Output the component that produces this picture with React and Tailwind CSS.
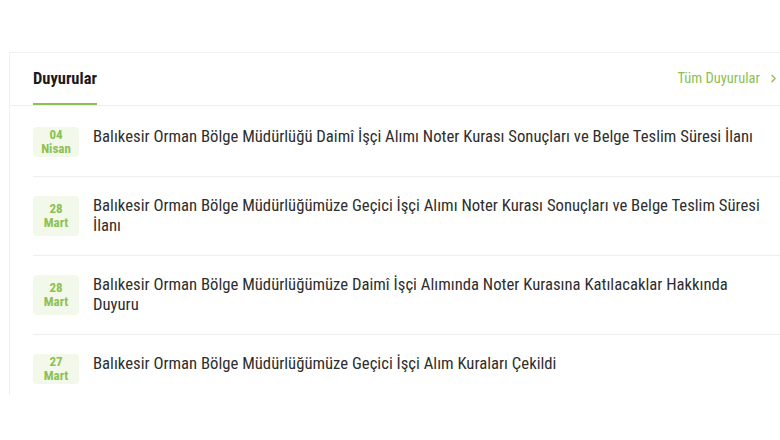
import { ChevronRight } from 'lucide-react'

const announcements = [
  { day: '04', month: 'Nisan', title: 'Balıkesir Orman Bölge Müdürlüğü Daimî İşçi Alımı Noter Kurası Sonuçları ve Belge Teslim Süresi İlanı' },
  { day: '28', month: 'Mart', title: 'Balıkesir Orman Bölge Müdürlüğümüze Geçici İşçi Alımı Noter Kurası Sonuçları ve Belge Teslim Süresi İlanı' },
  { day: '28', month: 'Mart', title: 'Balıkesir Orman Bölge Müdürlüğümüze Daimî İşçi Alımında Noter Kurasına Katılacaklar Hakkında Duyuru' },
  { day: '27', month: 'Mart', title: 'Balıkesir Orman Bölge Müdürlüğümüze Geçici İşçi Alım Kuraları Çekildi' },
]

export default function App() {
  return (
    <div className="w-[780px] h-[440px] bg-white pl-[9px] pt-[52px] font-['Roboto_Condensed',Roboto,sans-serif] overflow-hidden">
      <div className="h-[343px] border-l border-t border-[#f0f0f0] overflow-hidden">
        {/* Header */}
        <div className="flex items-stretch justify-between h-[53px] pl-[23px] border-b border-[#eeeeee]">
          <h2 className="flex items-center pt-[2px] border-b-2 border-[#8cc152] text-[16.5px] font-bold text-[#1a1a1a]">
            Duyurular
          </h2>
          <a className="flex items-center gap-[7px] pb-[1px] text-[14.5px] text-[#8cc152]">
            Tüm Duyurular
            <ChevronRight className="w-[13px] h-[13px]" strokeWidth={2.5} />
          </a>
        </div>

        {/* List */}
        <div className="pl-[23px]">
          {announcements.map((item, index) => (
            <div key={index} className="flex items-stretch gap-[14px] pt-[19px] first:pt-[21px] pb-[19px] pr-[4px] border-b border-[#eeeeee]">
              <div className="flex flex-col items-center justify-center shrink-0 w-[46px] min-h-[30px] rounded-[4px] bg-[#f2f8ea] text-[13px] font-bold leading-[14px] text-[#8cc152]">
                <span>{item.day}</span>
                <span>{item.month}</span>
              </div>
              <p className="text-[16.7px] leading-[20px] text-[#2e2e2e]">{item.title}</p>
            </div>
          ))}
        </div>
      </div>
    </div>
  )
}
